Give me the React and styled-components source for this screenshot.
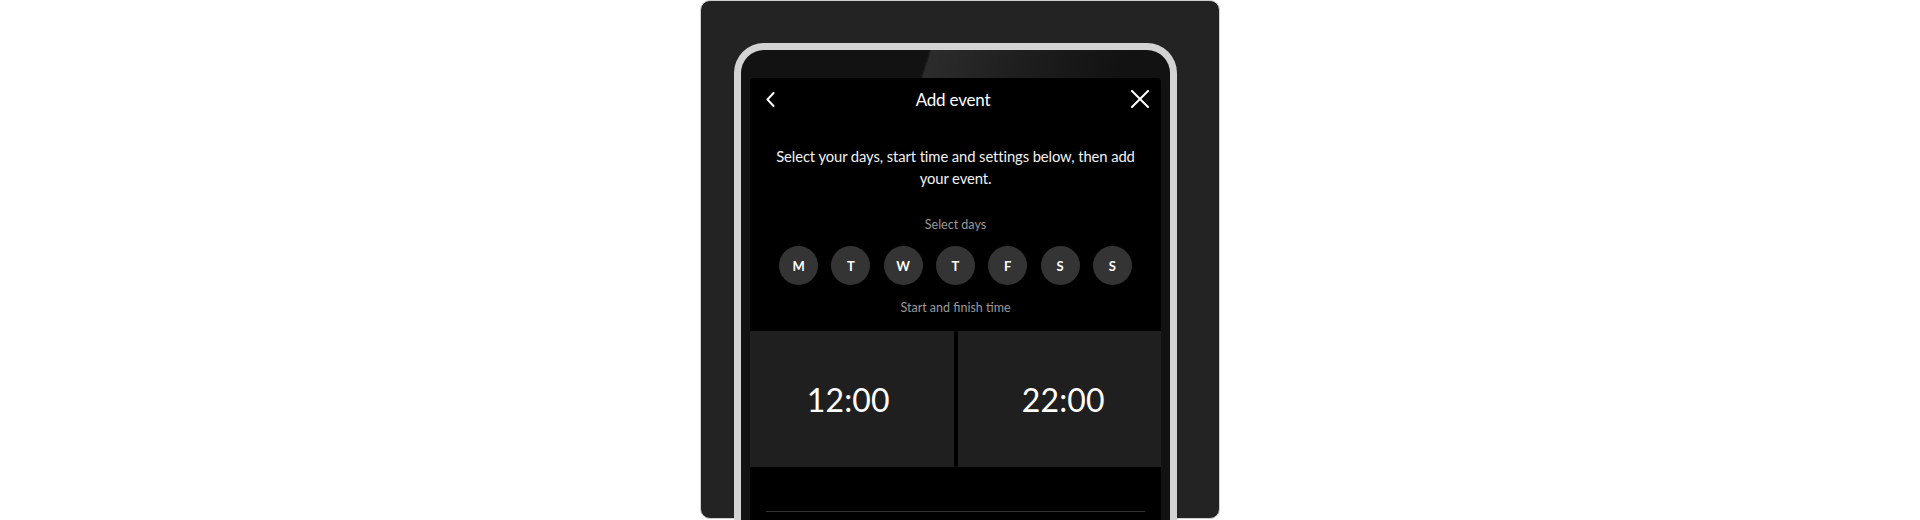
import React from "react";
import styled, { createGlobalStyle } from "styled-components";

const Global = createGlobalStyle`
  html, body {
    margin: 0;
    padding: 0;
    height: 520px;
    overflow: hidden;
    background: #ffffff;
    font-family: Lato, "Noto Sans", sans-serif;
  }
`;

const Page = styled.div`
  display: flex;
  justify-content: center;
  height: 520px;
`;

const Panel = styled.div`
  box-sizing: border-box;
  width: 520px;
  height: 519px;
  background: #232323;
  border: 1px solid #d0d0d0;
  border-radius: 10px;
  padding: 42px 0 0 33px;
`;

const Phone = styled.div`
  box-sizing: border-box;
  width: 443px;
  height: 560px;
  border: 7px solid #d3d3d3;
  border-bottom: none;
  border-radius: 30px 30px 0 0;
  padding: 28px 9px 0 9px;
  background:
    linear-gradient(
        108deg,
        transparent 0 43%,
        rgba(255, 255, 255, 0.11) 43.6%,
        rgba(255, 255, 255, 0.06) 62%,
        transparent 88%
      )
      top left / 100% 28px no-repeat,
    #121212;
`;

const Screen = styled.div`
  width: 411px;
  height: 100%;
  background: #000;
  border-radius: 4px 4px 0 0;
  display: flex;
  flex-direction: column;
  align-items: center;
  color: #fff;
`;

const Header = styled.div`
  width: 100%;
  box-sizing: border-box;
  height: 42px;
  padding: 0 12px 0 16px;
  display: flex;
  align-items: center;
  justify-content: space-between;
`;

const IconButton = styled.div`
  width: ${(p) => p.$w}px;
  height: 18px;
  display: flex;
  align-items: center;
  justify-content: center;
`;

const Title = styled.div`
  font-size: 17px;
  font-weight: 400;
  letter-spacing: -0.2px;
  color: #fff;
`;

const Intro = styled.p`
  margin: 25px 0 0;
  font-size: 14.8px;
  line-height: 22px;
  text-align: center;
  color: #f2f2f2;
  letter-spacing: -0.1px;
`;

const Label = styled.div`
  margin-top: ${(p) => p.$mt}px;
  font-size: 12.5px;
  line-height: 16px;
  color: #9a9a9a;
  text-align: center;
`;

const Days = styled.div`
  margin-top: 13px;
  display: flex;
  gap: 13.3px;
`;

const Day = styled.div`
  width: 39px;
  height: 39px;
  border-radius: 50%;
  background: #343434;
  display: flex;
  align-items: center;
  justify-content: center;
  font-size: 13px;
  font-weight: 700;
  color: #fff;
`;

const Times = styled.div`
  margin-top: 15px;
  width: 100%;
  display: grid;
  grid-template-columns: 1fr 1fr;
  gap: 4px;
`;

const TimeBox = styled.div`
  box-sizing: border-box;
  height: 136px;
  background: #1f1f1f;
  display: flex;
  align-items: center;
  justify-content: center;
  padding: ${(p) => (p.$side === "start" ? "0 7px 0 0" : "0 0 0 8px")};
  font-size: 32px;
  font-weight: 400;
  color: #fff;
  letter-spacing: 0.2px;
`;

const Divider = styled.div`
  margin-top: 44px;
  width: calc(100% - 32px);
  height: 1px;
  background: #333;
`;

const days = ["M", "T", "W", "T", "F", "S", "S"];

export default function App() {
  return (
    <>
      <Global />
      <Page>
        <Panel>
          <Phone>
            <Screen>
              <Header>
                <IconButton $w={9}>
                  <svg width="9" height="15" viewBox="0 0 9 15">
                    <path d="M7.5 1 L1.5 7.5 L7.5 14" fill="none" stroke="#fff" strokeWidth="2" strokeLinecap="round" strokeLinejoin="round" />
                  </svg>
                </IconButton>
                <Title>Add event</Title>
                <IconButton $w={18}>
                  <svg width="18" height="18" viewBox="0 0 18 18">
                    <path d="M1 1 L17 17 M17 1 L1 17" fill="none" stroke="#fff" strokeWidth="2" strokeLinecap="round" />
                  </svg>
                </IconButton>
              </Header>
              <Intro>
                Select your days, start time and settings below, then add
                <br />
                your event.
              </Intro>
              <Label $mt={28}>Select days</Label>
              <Days>
                {days.map((d, i) => (
                  <Day key={i}>{d}</Day>
                ))}
              </Days>
              <Label $mt={15}>Start and finish time</Label>
              <Times>
                <TimeBox $side="start">12:00</TimeBox>
                <TimeBox $side="end">22:00</TimeBox>
              </Times>
              <Divider />
            </Screen>
          </Phone>
        </Panel>
      </Page>
    </>
  );
}
